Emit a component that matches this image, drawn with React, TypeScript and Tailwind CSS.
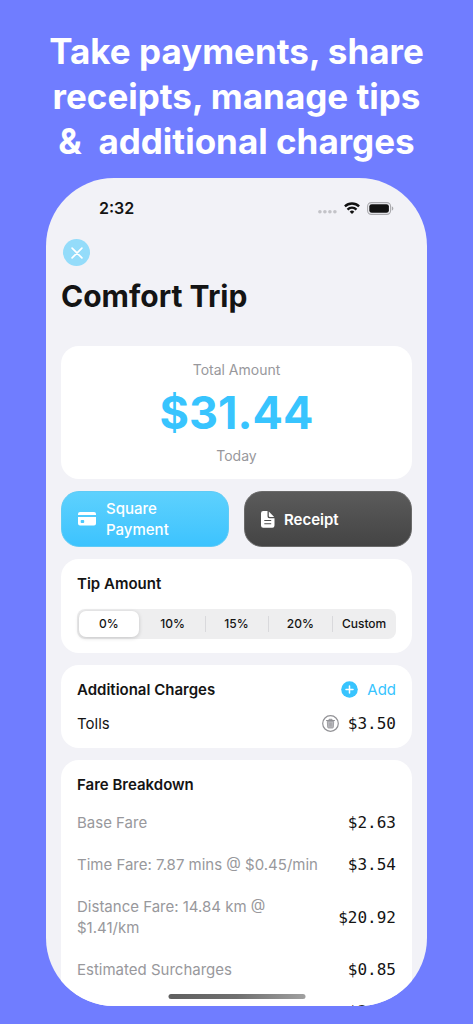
import React from "react"

const tips = ["0%", "10%", "15%", "20%", "Custom"]

const fares = [
  { label: "Base Fare", amount: "$2.63" },
  { label: "Time Fare: 7.87 mins @ $0.45/min", amount: "$3.54" },
  { label: "Distance Fare: 14.84 km @ $1.41/km", amount: "$20.92" },
  { label: "Estimated Surcharges", amount: "$0.85" },
  { label: "", amount: "$3.50" },
]

function StatusBar() {
  return (
    <div className="flex items-center justify-between pt-5 pl-[38px] pr-[18px]">
      <span className="text-base leading-5 font-semibold">2:32</span>
      <div className="flex items-center gap-[7px]">
        <svg width="20" height="14" viewBox="0 0 20 14" fill="#c3c3c8">
          <circle cx="2.9" cy="10.7" r="1.8" />
          <circle cx="7.9" cy="10.7" r="1.8" />
          <circle cx="12.9" cy="10.7" r="1.8" />
          <circle cx="17.9" cy="10.7" r="1.8" />
        </svg>
        <svg width="16" height="12" viewBox="0 0 16 12" fill="none" stroke="#111" strokeWidth="2.3">
          <path d="M0.9 4.400a10.2 10.2 0 0 1 14.2 0" />
          <path d="M3.500 7.600a6.300 6.300 0 0 1 9 0" />
          <path d="M8 12 5.700 9.700a3.300 3.300 0 0 1 4.600 0z" fill="#111" stroke="none" />
        </svg>
        <svg width="27" height="13" viewBox="0 0 27 13">
          <rect x="0.6" y="0.6" width="23" height="11.8" rx="3.8" fill="none" stroke="#a9a9ad" strokeWidth="1.1" />
          <rect x="2.3" y="2.2" width="19.6" height="8.6" rx="2.4" fill="#111" />
          <path d="M24.9 4.5v4c.9-.3 1.4-1.100 1.400-2s-.5-1.700-1.400-2z" fill="#a9a9ad" />
        </svg>
      </div>
    </div>
  )
}

export default function App() {
  const [tip, setTip] = React.useState("0%")

  return (
    <div className="flex flex-col h-screen bg-[#707dff] font-[Inter,sans-serif] text-[#141414]">
      <h1 className="pt-[29px] text-center text-[35px] leading-[45px] font-bold text-white whitespace-pre">
        {"Take payments, share\nreceipts, manage tips\n&  additional charges"}
      </h1>

      <div className="relative flex flex-col flex-1 min-h-0 mt-[14px] mx-[46px] mb-[18px] rounded-[68px] bg-[#f2f2f7] overflow-hidden">
        <main className="flex-1 min-h-0 px-[15px] overflow-y-auto [scrollbar-width:none]">
          <StatusBar />

          <button aria-label="Close" className="flex items-center justify-center size-[27px] mt-[21px] ml-[2px] rounded-full bg-[#94dcfa]">
            <svg width="12" height="12" viewBox="0 0 12 12" stroke="#fff" strokeWidth="1.7" strokeLinecap="round">
              <path d="M1.100 1.100l9.800 9.800M10.900 1.100l-9.800 9.800" />
            </svg>
          </button>
          <h2 className="mt-[10px] text-[30px] leading-10 font-bold">Comfort Trip</h2>

          <div className="flex flex-col gap-3 mt-[30px]">
            <section className="flex flex-col items-center pt-[14px] pb-[13px] rounded-[18px] bg-white text-sm leading-5 text-[#98989c]">
              <p>Total Amount</p>
              <p className="py-[5px] text-[45px] leading-14 font-bold text-[#38c4fe]">$31.44</p>
              <p>Today</p>
            </section>

            <div className="grid grid-cols-2 gap-[15px]">
              <button className="flex items-center gap-[10px] px-4 h-14 rounded-[18px] border border-[#5fcbf6] bg-linear-to-b from-[#5dd1fd] to-[#3cc3fe] text-left text-[15px] leading-[21px] font-medium text-white">
                <svg width="18" height="14" viewBox="0 0 18 14" fill="#fff">
                  <path d="M2 0h14a2 2 0 0 1 2 2v1H0V2a2 2 0 0 1 2-2z" />
                  <path fillRule="evenodd" d="M0 5h18v6.500a2 2 0 0 1-2 2H2a2 2 0 0 1-2-2zM3.500 8a.8.8 0 0 0-.8.8v1.400a.8.8 0 0 0 .8.8h1.900a.8.8 0 0 0 .8-.8V8.800a.8.8 0 0 0-.8-.8z" />
                </svg>
                <span>Square<br />Payment</span>
              </button>
              <button className="flex items-center gap-[9px] px-4 h-14 rounded-[18px] border border-[#6a6a6a] bg-linear-to-b from-[#5b5b5b] to-[#444] text-left text-[15px] leading-[21px] font-semibold text-white">
                <svg width="14" height="17" viewBox="0 0 14 17" fill="#fff">
                  <path fillRule="evenodd" d="M2.200 0H6.500v5.300a1.900 1.900 0 0 0 1.900 1.900H13.500v7.300a2.200 2.200 0 0 1-2.200 2.200H2.200A2.200 2.200 0 0 1 0 14.500V2.200A2.200 2.200 0 0 1 2.200 0zM3.300 9v1.100h6.900V9zM3.300 12.200v1.100h6.900v-1.100z" />
                  <path d="M7.800.4 13.200 5.900H8.600a.8.8 0 0 1-.8-.8z" />
                </svg>
                Receipt
              </button>
            </div>

            <section className="pt-[14px] pb-[14px] px-4 rounded-[18px] bg-white">
              <h3 className="text-[15px] leading-[21px] font-semibold">Tip Amount</h3>
              <fieldset aria-label="Tip Amount" className="grid grid-cols-5 mt-[15px] h-[30px] rounded-lg bg-[#eeeeef] text-xs">
                {tips.map((t, i) => (
                  <label key={t} className="relative flex items-center p-[2px] font-medium">
                    <input type="radio" name="tip" className="peer sr-only" checked={tip === t} onChange={() => setTip(t)} />
                    <span className="flex items-center justify-center w-full h-full rounded-[7px] peer-checked:bg-white peer-checked:shadow-[0_1px_4px_rgba(0,0,0,0.18)]">{t}</span>
                    {i > 1 && <span className="absolute left-0 top-[7px] h-4 w-px bg-[#d9d9dc]" />}
                  </label>
                ))}
              </fieldset>
            </section>

            <section className="flex flex-col gap-[13px] py-[14px] px-4 rounded-[18px] bg-white text-[15px] leading-[21px]">
              <div className="flex items-center justify-between">
                <h3 className="font-semibold">Additional Charges</h3>
                <button className="flex items-center gap-[9px] text-[#38c4fe]">
                  <svg width="17" height="17" viewBox="0 0 17 17">
                    <circle cx="8.500" cy="8.500" r="8.300" fill="#38c4fe" />
                    <path d="M8.500 5v7M5 8.500h7" stroke="#fff" strokeWidth="1.500" strokeLinecap="round" />
                  </svg>
                  Add
                </button>
              </div>
              <div className="flex items-center">
                <span className="flex-1">Tolls</span>
                <button aria-label="Remove Tolls" className="mr-[9px]">
                  <svg width="17" height="17" viewBox="0 0 17 17" fill="none" stroke="#929296">
                    <circle cx="8.500" cy="8.500" r="7.800" strokeWidth="1.200" />
                    <path d="M4.500 5.500h8M7 5.300v-1h3v1" strokeWidth="1" strokeLinecap="round" />
                    <path d="M5.300 6.300h6.400l-.4 6a.8.8 0 0 1-.8.7h-4a.8.8 0 0 1-.8-.7z" fill="#bcbcc0" strokeWidth=".8" />
                    <path d="M7.300 7.600v4M8.500 7.600v4M9.700 7.600v4" strokeWidth=".5" />
                  </svg>
                </button>
                <span className="font-['DejaVu_Sans_Mono',monospace] text-base leading-[21px]">$3.50</span>
              </div>
            </section>

            <section className="flex flex-col py-[14px] px-4 rounded-[18px] bg-white">
              <h3 className="text-[15px] leading-[21px] font-semibold">Fare Breakdown</h3>
              <dl className="flex flex-col gap-[21px] mt-[17px]">
                {fares.map((f, i) => (
                  <div key={i} className="flex items-center justify-between gap-4">
                    <dt className="max-w-[244px] text-[15px] leading-[21px] text-[#98989c]">{f.label}</dt>
                    <dd className="font-['DejaVu_Sans_Mono',monospace] text-base leading-[21px]">{f.amount}</dd>
                  </div>
                ))}
              </dl>
            </section>
          </div>
        </main>
        <div className="absolute bottom-[7px] left-1/2 -translate-x-1/2 w-[137px] h-[5px] rounded-full bg-linear-to-r from-[#606060] via-[#707070] to-[#a0a0a0]" />
      </div>
    </div>
  )
}
